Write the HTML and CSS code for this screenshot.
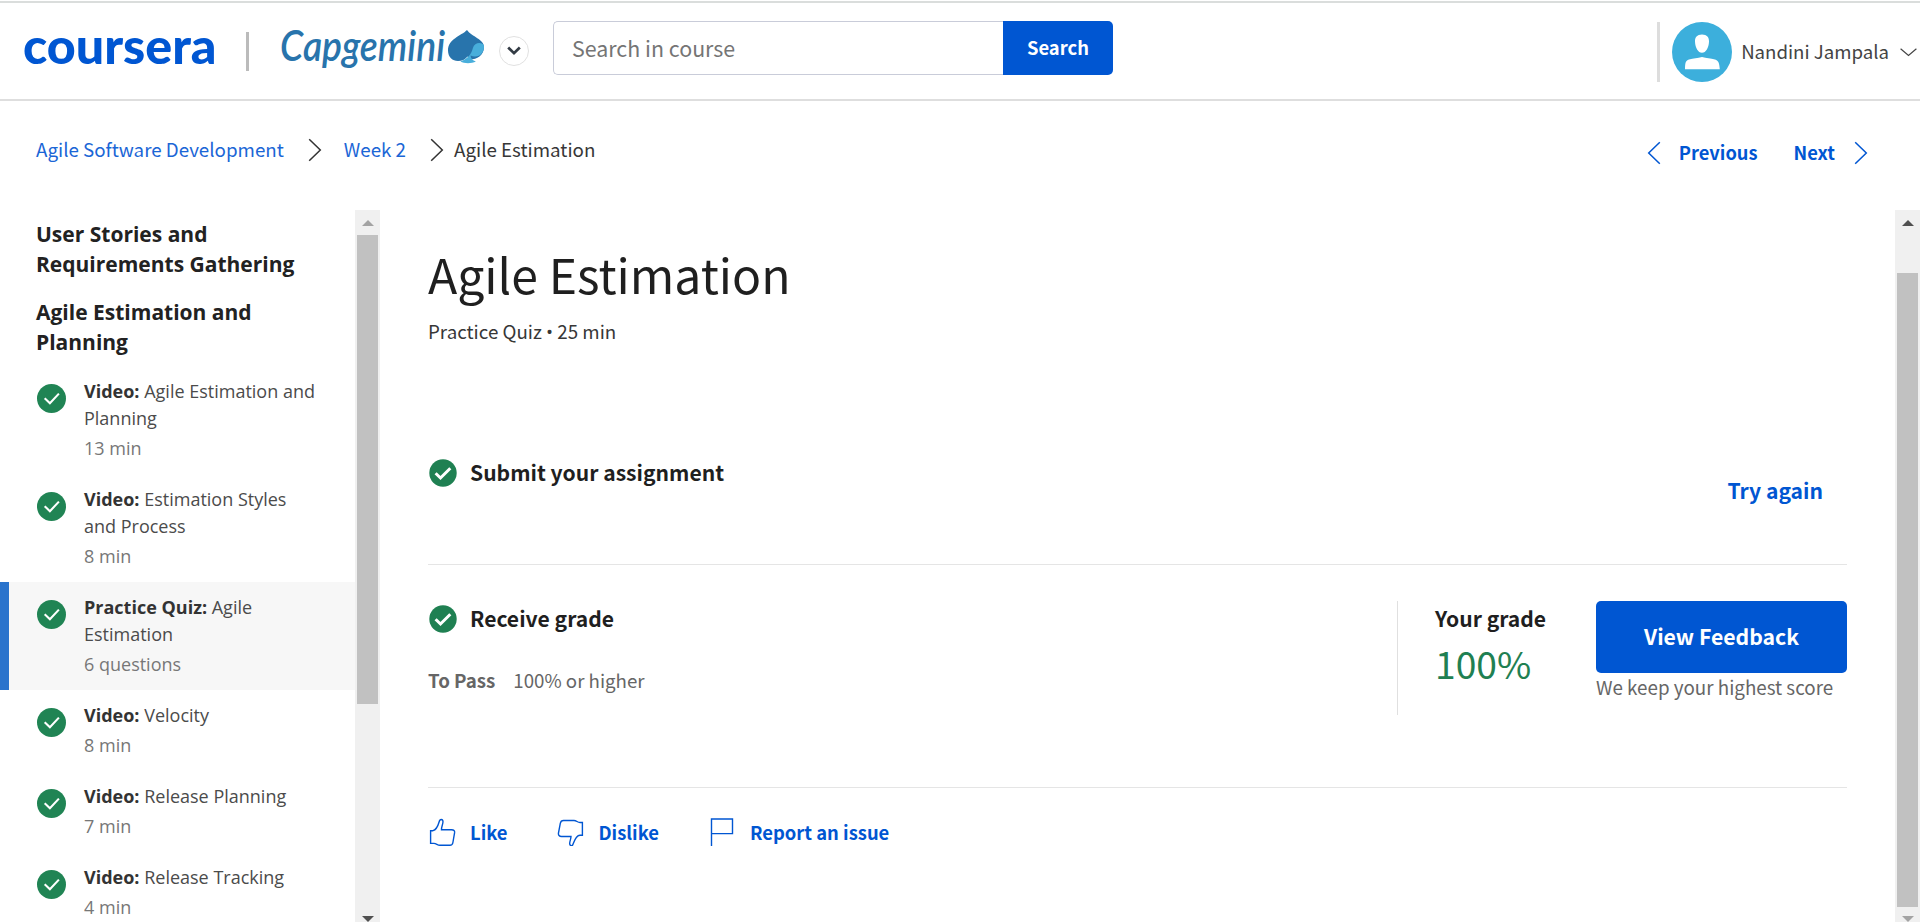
FILE: index.html
```html
<!DOCTYPE html>
<html lang="en">
<head>
<meta charset="utf-8">
<title>Agile Estimation | Coursera</title>
<link rel="stylesheet" href="styles.css">
</head>
<body>
<svg width="0" height="0" class="defs">
  <symbol id="done" viewBox="0 0 29 29"><circle cx="14.5" cy="14.5" r="14.5" fill="#208454"/><path d="M7.7 14.2l5.2 5L21.9 9.600" fill="none" stroke="#fff" stroke-width="2.1"/></symbol>
  <symbol id="done-bold" viewBox="0 0 28 28"><circle cx="14" cy="14" r="13.700" fill="#1f8052"/><path d="M6.600 14.200l4.900 4.800L21.300 9.200" fill="none" stroke="#fff" stroke-width="3"/></symbol>
  <symbol id="right" viewBox="0 0 14 24"><path d="M1.200 1.200L12.300 12 1.200 22.800" fill="none" stroke="currentColor" stroke-width="1.500"/></symbol>
</svg>
<header class="header">
  <svg class="coursera" width="194" height="60" viewBox="0 0 194 60"><text x="0" y="46" textLength="193.500" lengthAdjust="spacingAndGlyphs">coursera</text></svg>
  <span class="brand-divider"></span>
  <svg class="capgemini" width="206" height="56" viewBox="0 0 206 56">
    <text x="0" y="37" textLength="165" lengthAdjust="spacingAndGlyphs">Capgemini</text>
    <path d="M187 6C181 12 168 15 168 26.500c0 6.500 4.500 10.500 10 10.500 4 0 7-1.500 9.500-4.500l3 3c6 0 13.500-4 13.500-12.500C204 15 192 13 187 6z" fill="#2874ac"/>
    <path d="M203.900 21c-3-3.500-9.500-2.500-11 3-1.700 6-4 10-12.500 13.500 4 2.200 11 2.200 15.500 0-3.500-1-5-3-5.400-6 7.500 3.500 14.400-2 13.400-10.500z" fill="#48aedb"/>
  </svg>
  <span class="round"><svg width="14" height="10" viewBox="0 0 14 10"><path d="M1.200 1.500L7 7.200l5.800-5.700" fill="none" stroke="#333b44" stroke-width="2.700"/></svg></span>
  <div class="search"><div class="search-field">Search in course</div><div class="search-button">Search</div></div>
  <div class="user">
    <svg width="60" height="60" viewBox="0 0 60 60"><circle cx="30" cy="30" r="30" fill="#3cafdc"/><path d="M30 12.600c5 0 7.200 3 7 7.200-.3 6-3 11-7 11s-6.700-5-7-11c-.2-4.200 2-7.200 7-7.200zM13 47.300c.2-6 .3-8.500 4-9.700 4.500-1.400 8.500-1.600 13-2.600 4.500 1 8.500 1.200 13 2.600 3.700 1.200 4.300 3.700 4.800 9.700z" fill="#fff"/></svg>
    <span class="user-name">Nandini Jampala</span>
    <svg width="17" height="9" viewBox="0 0 17 9"><path d="M.6.800l7.900 6.700L16.400.8" fill="none" stroke="#444" stroke-width="1.200"/></svg>
  </div>
</header>
<nav class="nav">
  <div class="crumbs">
    <a class="crumb-course">Agile Software Development</a><svg class="crumb-arrow" width="14" height="24"><use href="#right"/></svg>
    <a class="crumb-week">Week 2</a><svg class="crumb-arrow" width="14" height="24"><use href="#right"/></svg>
    <span class="crumb-here">Agile Estimation</span>
  </div>
  <div class="pager">
    <svg class="flip" width="14" height="24"><use href="#right"/></svg><b class="previous">Previous</b><b class="next">Next</b><svg class="forward" width="14" height="24"><use href="#right"/></svg>
  </div>
</nav>
<div class="body">
  <aside class="sidebar">
    <h2>User Stories and Requirements Gathering</h2>
    <h2>Agile Estimation and Planning</h2>
    <ul>
      <li><svg width="29" height="29"><use href="#done"/></svg><div><b>Video:</b> Agile Estimation and Planning<small>13 min</small></div></li>
      <li><svg width="29" height="29"><use href="#done"/></svg><div><b>Video:</b> Estimation Styles and Process<small>8 min</small></div></li>
      <li class="current"><svg width="29" height="29"><use href="#done"/></svg><div><b>Practice Quiz:</b> Agile Estimation<small>6 questions</small></div></li>
      <li><svg width="29" height="29"><use href="#done"/></svg><div><b>Video:</b> Velocity<small>8 min</small></div></li>
      <li><svg width="29" height="29"><use href="#done"/></svg><div><b>Video:</b> Release Planning<small>7 min</small></div></li>
      <li><svg width="29" height="29"><use href="#done"/></svg><div><b>Video:</b> Release Tracking<small>4 min</small></div></li>
    </ul>
  </aside>
  <div class="scrollbar side-scroll"><i class="up muted"></i><span class="thumb"></span><i class="down"></i></div>
  <main class="main">
    <h1>Agile Estimation</h1>
    <p class="meta">Practice Quiz <span class="dot">•</span> 25 min</p>
    <section class="submit">
      <div class="step"><svg width="28" height="28"><use href="#done-bold"/></svg><h3>Submit your assignment</h3></div>
      <a class="again">Try again</a>
    </section>
    <section class="receive">
      <div class="result">
        <div class="step"><svg width="28" height="28"><use href="#done-bold"/></svg><h3>Receive grade</h3></div>
        <p class="pass"><b>To Pass</b><span>100% or higher</span></p>
      </div>
      <div class="grade"><h3>Your grade</h3><div class="score">100%</div></div>
      <div class="feedback"><div class="button">View Feedback</div><p>We keep your highest score</p></div>
    </section>
    <footer class="actions">
      <svg width="28" height="28" viewBox="0 0 28 28"><path d="M2.600 12.700H5c2.500-.8 5-5 6-8.500.6-2.200 1.300-2.700 2.200-2.700 1.500 0 2 1.200 1.700 3-.3 2.500-1.400 4-1.400 7.200h10c2.400 0 3.400 1 3.100 3l-1.700 9.800c-.3 2-1.200 2.800-3 2.800h-10c-2.500 0-3.500-1.800-6-1.900H2.600z"/></svg><b class="like">Like</b>
      <svg width="28" height="28" viewBox="0 0 28 28"><path d="M26.400 4.500H24c-2.500 0-3.500-2-6-2H7.500c-2 0-2.800.8-3.200 2.800L2.500 14.900c-.4 2.200.8 3.600 3 3.600H15c0 2.600-1.500 5-1.300 7.400.1 1.800 2.500 2.500 3.200.7 1.200-3.100 2.800-9.200 7-9.400h2.500z"/></svg><b class="dislike">Dislike</b>
      <svg width="28" height="28" viewBox="0 0 28 28"><path d="M3.500 28V1h21v14.600h-21"/></svg><b>Report an issue</b>
    </footer>
  </main>
  <div class="scrollbar main-scroll"><i class="up"></i><span class="thumb"></span><i class="down muted"></i></div>
</div>
</body>
</html>
```
FILE: styles.css
```css
* { box-sizing: border-box; }
html, body { height: 100%; }
body { margin: 0; padding-top: 1px; overflow: hidden; background: #fff; color: #1f1f1f; font: 18.7px/28px "Noto Sans CJK SC", sans-serif; }
svg { display: block; flex: none; }
h1, h2, h3, p, ul { margin: 0; padding: 0; }
.defs { position: absolute; }

.header { display: flex; align-items: flex-start; height: 100px; border-top: 2px solid #dadddc; border-bottom: 2px solid #dedede; }
.coursera { margin: 15px 0 0 23px; overflow: visible; fill: #0056d2; font: 900 50px Lato, sans-serif; }
.brand-divider { width: 3px; height: 39px; margin: 29px 0 0 29px; background: #bbb; }
.capgemini { margin: 21px 0 0 31px; overflow: visible; }
.capgemini text { fill: #2874ac; font: italic 600 42px Lato, sans-serif; }
.round { display: flex; align-items: center; justify-content: center; width: 30px; height: 30px; margin: 33px 0 0 13px; border: 1px solid #e1e1e1; border-radius: 50%; }
.search { display: flex; width: 560px; height: 54px; margin: 18px 0 0 24px; }
.search-field { flex: 1; padding-left: 18px; border: 1px solid #c9ccd9; border-right: 0; border-radius: 5px 0 0 5px; color: #757575; font-size: 21.4px; line-height: 52px; }
.search-button { width: 110px; border-radius: 0 5px 5px 0; background: #0056d2; color: #fff; font-size: 18.4px; font-weight: 700; line-height: 52px; text-align: center; }
.user { display: flex; align-items: center; height: 60px; margin: 19px 3px 0 auto; padding-left: 12px; border-left: 3px solid #ddd; }
.user-name { margin: -2px 11px 0 9px; color: #444; font-size: 18.64px; }

.nav { display: flex; justify-content: space-between; height: 109px; padding: 0 52px 0 36px; }
.crumbs, .pager { display: flex; align-items: center; height: 28px; margin-top: 34px; }
.crumbs { color: #373737; font-size: 18.75px; }
.crumbs a { color: #1b66d6; }
.crumb-arrow { margin-top: 2px; color: #333; }
.crumb-course { margin-right: 24px; }
.crumb-week { margin: 0 24px 0 22px; }
.crumb-here { margin-left: 10px; }
.pager { margin-top: 37px; color: #0056d2; font-size: 18.3px; }
.flip { transform: scaleX(-1); }
.pager svg { margin-top: 1px; }
.previous { margin: 0 36px 0 18px; }
.next { margin-right: 19px; }

.body { display: flex; height: 712px; }
.sidebar { width: 355px; padding-top: 9px; overflow: hidden; color: #4b4b4b; font: 18px/27px "Open Sans", sans-serif; }
.sidebar h2 { width: 300px; margin: 0 0 18px 36px; color: #222; font-size: 21px; line-height: 30px; font-weight: 700; }
.sidebar h2 + h2 { margin-bottom: 9px; }
.sidebar ul { list-style: none; }
.sidebar li { display: flex; gap: 18px; padding: 12px 35px 12px 37px; }
.sidebar li svg { margin-top: 6px; }
.sidebar li b { color: #333; }
.sidebar small { display: block; margin-top: 3px; color: #777; font-size: 18px; }
.sidebar .current { padding-left: 28px; border-left: 9px solid #2a73cc; background: #f7f7f7; }

.scrollbar { display: flex; flex-direction: column; align-items: center; width: 25px; background: #f0f0f0; }
.up, .down { border: 6px solid transparent; border-top: 0; border-bottom: 6px solid #505050; margin-top: 10px; }
.down { border-top: 6px solid #505050; border-bottom: 0; margin: auto 0 0; }
.up.muted { border-bottom-color: #a3a3a3; }
.down.muted { border-top-color: #a3a3a3; }
.thumb { width: 21px; background: #c1c1c1; }
.side-scroll .thumb { height: 469px; margin-top: 9px; }
.main-scroll .thumb { height: 634px; margin-top: 47px; }

.main { width: 1419px; margin: 0 48px; padding-top: 33px; }
h1 { font-size: 48.1px; line-height: 60px; font-weight: 400; }
.meta { margin-top: 14px; color: #373737; font-size: 18.75px; }
.dot { font-family: "Open Sans", sans-serif; }
h3 { font-size: 21.1px; line-height: 28px; font-weight: 700; }
.step { display: flex; gap: 14px; }
.step svg { margin-left: 1px; margin-right: -1px; }
.submit .step svg { margin-top: -1px; }
.submit .step h3 { margin-top: -2px; }
.receive .step h3 { margin-top: -1px; }
.submit { display: flex; justify-content: space-between; height: 105px; margin-top: 114px; border-bottom: 1px solid #e5e5e5; }
.again { margin: 16px 24px 0 0; color: #0056d2; font-size: 21.1px; font-weight: 700; }
.receive { display: flex; height: 223px; padding-top: 36px; border-bottom: 1px solid #e5e5e5; }
.result { width: 969px; padding-top: 4px; }
.pass { display: flex; gap: 18px; margin-top: 33px; color: #666; }
.grade { width: 199px; height: 114px; padding: 3px 0 0 37px; border-left: 1px solid #e0e0e0; }
.score { margin-top: 11px; color: #1f8052; font-size: 37.2px; line-height: 40px; }
.feedback { width: 251px; color: #666; font-size: 18.8px; white-space: nowrap; }
.button { height: 72px; border-radius: 5px; background: #0056d2; color: #fff; font-size: 21.2px; font-weight: 700; line-height: 70px; text-align: center; }
.actions { display: flex; align-items: center; height: 28px; margin-top: 30px; color: #0056d2; font-size: 18.4px; }
.actions svg { fill: none; stroke: #0056d2; stroke-width: 1.4; }
.actions b { margin-left: 14px; }
.actions .like { margin-right: 49px; }
.actions .dislike { margin-right: 49px; }
```
